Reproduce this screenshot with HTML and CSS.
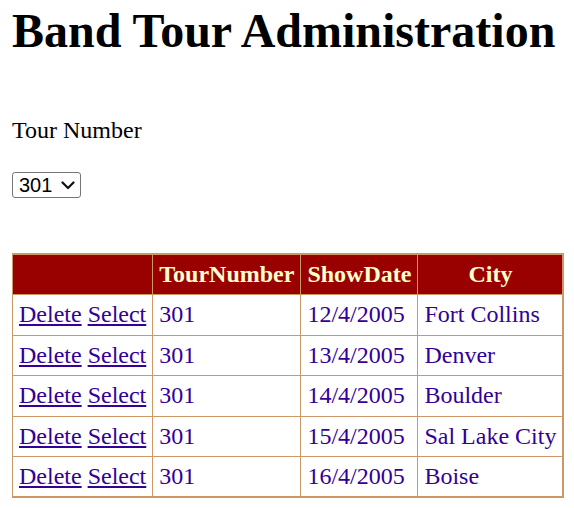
FILE: index.html
```html
<!DOCTYPE html>
<html lang="en">
<head>
<meta charset="utf-8">
<title>Band Tour Administration</title>
<link rel="stylesheet" href="styles.css">
</head>
<body>
<h1 class="title">Band Tour Administration</h1>
<p class="label">Tour Number</p>
<div class="picker">
  <span class="select-wrap">
    <select class="tour-select">
      <option>301</option>
      <option>302</option>
    </select>
    <svg class="chevron" width="14" height="9" viewBox="0 0 14 9" aria-hidden="true"><path d="M1.5 1.5 L7 7 L12.5 1.5" fill="none" stroke="#111" stroke-width="2.2" stroke-linecap="round" stroke-linejoin="round"/></svg>
  </span>
</div>
<table class="grid">
  <thead>
    <tr class="grid-head">
      <th>&nbsp;</th>
      <th>TourNumber</th>
      <th>ShowDate</th>
      <th>City</th>
    </tr>
  </thead>
  <tbody>
    <tr><td><a href="#">Delete</a> <a href="#">Select</a></td><td>301</td><td>12/4/2005</td><td>Fort Collins</td></tr>
    <tr><td><a href="#">Delete</a> <a href="#">Select</a></td><td>301</td><td>13/4/2005</td><td>Denver</td></tr>
    <tr><td><a href="#">Delete</a> <a href="#">Select</a></td><td>301</td><td>14/4/2005</td><td>Boulder</td></tr>
    <tr><td><a href="#">Delete</a> <a href="#">Select</a></td><td>301</td><td>15/4/2005</td><td>Sal Lake City</td></tr>
    <tr><td><a href="#">Delete</a> <a href="#">Select</a></td><td>301</td><td>16/4/2005</td><td>Boise</td></tr>
  </tbody>
</table>
</body>
</html>
```
FILE: styles.css
```css
html, body {
  background: #ffffff;
}
body {
  margin: 3px 0 12px 12px;
  font-family: "Liberation Serif", "Times New Roman", serif;
  font-size: 24px;
  color: #000000;
}
.title {
  margin: 0;
  font-size: 48px;
  font-weight: bold;
}
.label {
  margin: 59px 0 0;
}
.picker {
  margin-top: 28px;
  height: 26px;
}
.select-wrap {
  position: relative;
  display: inline-block;
  vertical-align: top;
}
.tour-select {
  display: block;
  appearance: none;
  -webkit-appearance: none;
  font-family: "Liberation Sans", Arial, sans-serif;
  font-size: 20px;
  line-height: 24px;
  height: 26px;
  width: 69px;
  margin: 0;
  padding: 0 0 0 6px;
  color: #000;
  border: 1px solid #767676;
  border-radius: 3px;
  background: #fff;
}
.chevron {
  position: absolute;
  left: 49px;
  top: 9px;
  pointer-events: none;
}
.grid {
  margin: 55px 0 0 -1px;
  border-collapse: collapse;
  border: 2px solid #CC9966;
  background: #ffffff;
  color: #330099;
}
.grid th,
.grid td {
  border: 1px solid #CC9966;
  padding: 6px;
  line-height: 27.4px;
  white-space: nowrap;
}
.grid th {
  background: #990000;
  color: #FFFFCC;
  font-weight: bold;
  text-align: center;
}
.grid td {
  text-align: left;
}
.grid a {
  color: #330099;
}
```
